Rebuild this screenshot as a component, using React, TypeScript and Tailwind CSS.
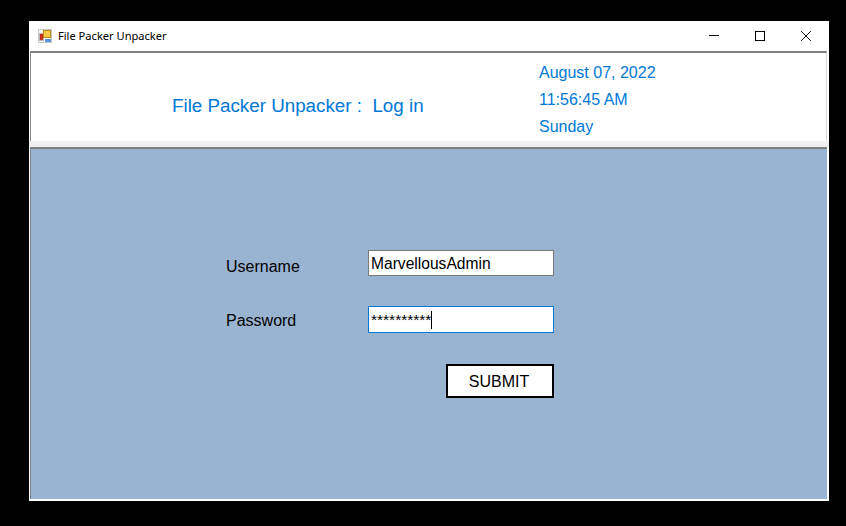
function AppIcon() {
    return (
        <svg width="14" height="14" viewBox="0 0 14 14" className="shrink-0">
            <rect x="0.5" y="0.5" width="13" height="13" fill="#f7f7f7" stroke="#c8c8c8" />
            <rect x="1" y="4" width="5" height="8" fill="#b8b8b8" />
            <rect x="2" y="5" width="3" height="6" fill="#c42b1c" />
            <rect x="5.5" y="1.5" width="7" height="7" fill="#f7c948" stroke="#b98a1a" />
            <rect x="7" y="10" width="6" height="3" fill="#5b93dc" />
        </svg>
    );
}

export default function App() {
    return (
        <div className="h-[526px] w-[846px] overflow-hidden bg-black pl-[29px] pt-[21px] font-['Liberation_Sans',sans-serif]">
            <div className="flex h-[480px] w-[800px] flex-col bg-white">
                {/* Title bar */}
                <div className="flex h-[30px] shrink-0 items-center pl-[9px]">
                    <AppIcon />
                    <span className="ml-[6px] font-['Noto_Sans',sans-serif] text-[11.1px] text-black">File Packer Unpacker</span>
                    <div className="ml-auto flex items-center text-black">
                        <div className="flex w-[46px] justify-center">
                            <svg width="10" height="10" viewBox="0 0 10 10" fill="none" stroke="currentColor">
                                <path d="M0 4.5H10" />
                            </svg>
                        </div>
                        <div className="flex w-[46px] justify-center">
                            <svg width="10" height="10" viewBox="0 0 10 10" fill="none" stroke="currentColor">
                                <rect x="0.5" y="0.5" width="9" height="9" />
                            </svg>
                        </div>
                        <div className="flex w-[46px] justify-center">
                            <svg width="10" height="10" viewBox="0 0 10 10" fill="none" stroke="currentColor" strokeWidth="0.9">
                                <path d="M0 0L10 10M10 0L0 10" />
                            </svg>
                        </div>
                    </div>
                </div>

                {/* Header panel */}
                <div className="ml-px mr-[2px] flex h-[90px] shrink-0 border-r border-l border-t-2 border-r-[#d8d8d8] border-l-[#8a8a8a] border-t-[#808080] bg-white text-[#0078d7]">
                    <div className="w-[508px] pl-[141px] pt-[41px] text-[18.8px] leading-[24px]">
                        File Packer Unpacker :&nbsp; Log in
                    </div>
                    <div className="flex flex-col pt-[6px] text-[16px] leading-[27px]">
                        <span>August 07, 2022</span>
                        <span>11:56:45 AM</span>
                        <span>Sunday</span>
                    </div>
                </div>

                {/* Separator */}
                <div className="h-[6px] shrink-0 bg-[#f0f0f0]" />

                {/* Login panel */}
                <div className="ml-px mr-[2px] flex-1 border-l border-t-2 border-l-[#808080] border-t-[#808080] bg-[#99b4d1] pl-[195px] pt-[101px] text-black">
                    <div className="flex h-[26px] items-center">
                        <span className="w-[142px] pt-[8px] text-[16px]">Username</span>
                        <div className="flex h-[26px] w-[186px] items-center border border-[#7a7a7a] bg-white pl-[2px] pt-[2px] text-[15.6px]">MarvellousAdmin</div>
                    </div>
                    <div className="mt-[30px] flex h-[27px] items-center">
                        <span className="w-[142px] pt-[2px] text-[16px]">Password</span>
                        <div className="flex h-[27px] w-[186px] items-center border border-[#0078d7] bg-white pl-[2px] text-[15.5px]">
                            <span className="leading-none">**********</span>
                            <span className="h-[18px] w-px bg-black" />
                        </div>
                    </div>
                    <div className="mt-[31px] flex w-[328px] justify-end">
                        <div className="flex h-[34px] w-[108px] items-center justify-center border-2 border-black bg-white pt-[2px] pr-[2px] text-[16px]">SUBMIT</div>
                    </div>
                </div>
                <div className="h-[2px] shrink-0 bg-white" />
            </div>
        </div>
    );
}
